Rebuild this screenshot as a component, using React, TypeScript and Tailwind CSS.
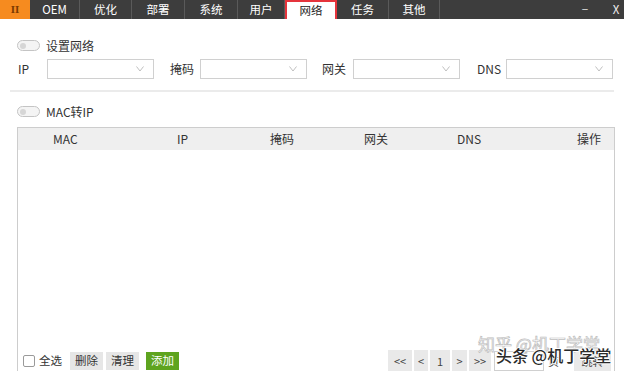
import React from "react"

const tabs = [
  { label: "OEM", w: "w-[50px]" },
  { label: "优化", w: "w-[52px]" },
  { label: "部署", w: "w-[53px]" },
  { label: "系统", w: "w-[53px]" },
  { label: "用户", w: "w-[47px]" },
  { label: "网络", w: "w-[52px]", active: true },
  { label: "任务", w: "w-[52px]" },
  { label: "其他", w: "w-[51px]" },
]

function Toggle() {
  return (
    <span className="w-[23px] h-[11px] rounded-full border border-[#c4c4c4] bg-[#f4f4f4] flex items-center pl-[2px] shrink-0">
      <span className="w-[6px] h-[6px] rounded-full bg-[#d6d6d6]" />
    </span>
  )
}

function Select() {
  return (
    <div className="w-[107px] h-[20px] border border-[#d0d0d0] bg-white flex items-center justify-end pr-[9px]">
      <svg width="8" height="6" viewBox="0 0 8 6" fill="none">
        <polyline points="0.5,0.5 4,5 7.5,0.5" stroke="#b8b8b8" strokeWidth="0.9" />
      </svg>
    </div>
  )
}

function Field({ label, lw, ml }: { label: string; lw: string; ml: string }) {
  return (
    <div className={`flex items-center ${ml}`}>
      <span className={`${lw} text-[12px] text-[#333]`}>{label}</span>
      <Select />
    </div>
  )
}

function PageBtn({ children, w }: { children: React.ReactNode; w: string }) {
  return (
    <span className={`${w} h-[22px] bg-[#e9e9e9] flex items-center justify-center text-[11px] text-[#444] shrink-0`}>
      {children}
    </span>
  )
}

export default function App() {
  return (
    <div
      className="relative w-[624px] h-[371px] overflow-hidden bg-white text-[#333]"
      style={{ fontFamily: '"Noto Sans CJK SC", "Noto Sans", sans-serif' }}
    >
      {/* title bar */}
      <div className="flex h-[19px] bg-[#3d3d3d] text-white text-[11.5px] leading-none">
        <div className="w-[30px] bg-[#f68b1f] flex items-center justify-center text-[#7a3a00] text-[11px] font-bold" style={{ fontFamily: '"Liberation Serif", serif' }}>
          II
        </div>
        {tabs.map(t => (
          <div
            key={t.label}
            className={`${t.w} flex items-center justify-center ${
              t.active
                ? "bg-white text-[#222] border-2 border-[#e5343c] border-b-0"
                : "border-r border-[#5a5a5a]"
            }`}
          >
            {t.label}
          </div>
        ))}
        <div className="flex-1" />
        <span className="w-[14px] flex items-center justify-center text-[#ddd] mr-[19px]">−</span>
        <span className="w-[10px] flex items-center justify-center text-[#eee] mr-[3px]">X</span>
      </div>

      {/* network settings */}
      <div className="pl-[17px] pt-[21px]">
        <div className="flex items-center gap-[6px] h-[11px]">
          <Toggle />
          <span className="text-[12px] text-[#333]">设置网络</span>
        </div>
      </div>
      <div className="flex items-center pl-[18px] mt-[8px] h-[20px]">
        <Field label="IP" lw="w-[29px]" ml="" />
        <Field label="掩码" lw="w-[30px]" ml="ml-[16px]" />
        <Field label="网关" lw="w-[31px]" ml="ml-[15px]" />
        <Field label="DNS" lw="w-[29px]" ml="ml-[17px]" />
      </div>
      <div className="mx-[10px] mt-[11px] h-[2px] bg-[#ebebeb]" />

      {/* MAC to IP */}
      <div className="pl-[17px] mt-[14px] flex items-center gap-[6px] h-[11px]">
        <Toggle />
        <span className="text-[12px] text-[#333]">MAC转IP</span>
      </div>

      <div className="ml-[17px] w-[598px] mt-[10px] h-[260px] border border-[#cdcdcd] flex flex-col">
        <div className="h-[22px] bg-[#efefef] flex items-center text-[12px] text-[#333] pl-[35px]">
          <span className="w-[124px]">MAC</span>
          <span className="w-[93px]">IP</span>
          <span className="w-[94px]">掩码</span>
          <span className="w-[93px]">网关</span>
          <span className="w-[120px]">DNS</span>
          <span>操作</span>
        </div>
        <div className="flex-1" />
        <div className="flex items-center h-[22px] mb-[14px] pl-[5px]">
          <span className="w-[12px] h-[12px] border border-[#9a9a9a] rounded-[2px] bg-white" />
          <span className="ml-[4px] text-[11.5px]">全选</span>
          <span className="ml-[8px] w-[33px] h-[18px] bg-[#e6e6e6] flex items-center justify-center text-[11.5px]">删除</span>
          <span className="ml-[3px] w-[33px] h-[18px] bg-[#e6e6e6] flex items-center justify-center text-[11.5px]">清理</span>
          <span className="ml-[7px] w-[33px] h-[18px] bg-[#5ea41f] text-white flex items-center justify-center text-[11.5px]">添加</span>
          <div className="flex-1" />
          <div className="flex items-center gap-[2px] mr-[3px]">
            <PageBtn w="w-[24px]">&lt;&lt;</PageBtn>
            <PageBtn w="w-[14px]">&lt;</PageBtn>
            <PageBtn w="w-[20px]">1</PageBtn>
            <PageBtn w="w-[15px]">&gt;</PageBtn>
            <PageBtn w="w-[22px]">&gt;&gt;</PageBtn>
            <span className="ml-[1px] w-[50px] h-[20px] border border-[#d0d0d0] bg-white shrink-0" />
            <span className="ml-[2px] w-[24px] text-[11px] text-[#444] shrink-0">页</span>
            <PageBtn w="w-[37px]">跳转</PageBtn>
          </div>
        </div>
      </div>

      {/* watermarks */}
      <span
        className="absolute left-[478px] top-[335px] text-[17px] leading-none whitespace-nowrap text-white"
        style={{ WebkitTextStroke: "0.7px #bdbdbd" }}
      >
        知乎 @机丁学堂
      </span>
      <span
        className="absolute left-[496px] top-[347px] text-[16px] leading-none whitespace-nowrap text-[#2a2a2a] font-medium"
        style={{ textShadow: "1px 0 #fff, -1px 0 #fff, 0 1px #fff, 0 -1px #fff" }}
      >
        头条 @机丁学堂
      </span>
    </div>
  )
}
